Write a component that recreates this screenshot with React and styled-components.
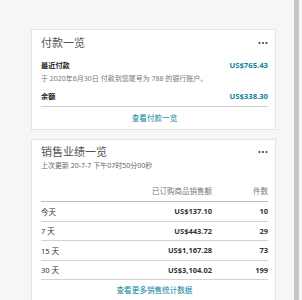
import { Fragment } from 'react'
import { createGlobalStyle, styled } from 'styled-components'

const GlobalStyle = createGlobalStyle`
    html, body {
        margin: 0;
        padding: 0;
        background: #f6f6f6;
        font-family: "Noto Sans", "Noto Sans CJK SC", sans-serif;
    }
`

const Page = styled.div`
    display: flex;
    width: 302px;
    height: 300px;
    overflow: hidden;
`

const Column = styled.div`
    display: flex;
    flex-direction: column;
    gap: 9px;
    padding: 29px 0 0 31px;
    width: 245px;
`

const Gutter = styled.div`
    width: 18px;
`

const Scrollbar = styled.div`
    width: 5px;
    background: #c6c6c6;
`

const Card = styled.div`
    background: #fff;
    border: 1px solid #e4e4e4;
    padding: 0 7px 0 9px;
`

const Head = styled.div`
    display: flex;
    justify-content: space-between;
    align-items: center;
    padding-top: ${(p) => p.$top}px;
    height: 12px;
`

const Title = styled.div`
    font-size: 11px;
    line-height: 12px;
    color: #555;
`

const Subtitle = styled.div`
    margin-top: 3px;
    font-size: 7px;
    line-height: 10px;
    color: #666;
`

const Line = styled.div`
    display: flex;
    justify-content: space-between;
    align-items: center;
    margin-top: ${(p) => p.$top}px;
    line-height: 10px;
`

const Label = styled.span`
    font-size: 7.2px;
    font-weight: 700;
    color: #1a1a1a;
`

const Money = styled.span`
    font-size: 7.7px;
    font-weight: 700;
    color: #0b8597;
`

const Note = styled.div`
    margin-top: 4px;
    font-size: 7px;
    line-height: 10px;
    color: #777;
`

const Block = styled.div`
    padding-bottom: 5px;
    border-bottom: 1px solid #cfcfcf;
`

const Link = styled.div`
    text-align: center;
    font-size: 7.6px;
    line-height: ${(p) => p.$h}px;
    color: #0b8597;
`

const Table = styled.div`
    display: grid;
    grid-template-columns: 1fr auto 56px;
    margin-top: 12px;
`

const Cell = styled.div`
    display: flex;
    align-items: center;
    justify-content: ${(p) => (p.$left ? 'flex-start' : 'flex-end')};
    height: ${(p) => (p.$head ? 14 : 18.5)}px;
    border-bottom: 1px solid ${(p) => (p.$head ? '#bdbdbd' : '#d2d2d2')};
    font-size: 7.5px;
    font-weight: ${(p) => (p.$bold ? 700 : 400)};
    color: ${(p) => (p.$head ? '#777' : '#333')};
    padding-bottom: ${(p) => (p.$head ? 4 : 0)}px;
`

const More = () => (
    <svg width="10" height="4" viewBox="0 0 10 4">
        <circle cx="1.5" cy="2" r="1.1" fill="#444" />
        <circle cx="5" cy="2" r="1.1" fill="#444" />
        <circle cx="8.5" cy="2" r="1.1" fill="#444" />
    </svg>
)

const rows = [
    ['今天', 'US$137.10', '10'],
    ['7 天', 'US$443.72', '29'],
    ['15 天', 'US$1,167.28', '73'],
    ['30 天', 'US$3,104.02', '199'],
]

export default function App() {
    return (
        <>
            <GlobalStyle />
            <Page>
                <Column>
                    <Card>
                        <Head $top={7}>
                            <Title>付款一览</Title>
                            <More />
                        </Head>
                        <Block>
                            <Line $top={11}>
                                <Label>最近付款</Label>
                                <Money>US$765.43</Money>
                            </Line>
                            <Note>于 2020年6月30日 付款到您尾号为 788 的银行账户。</Note>
                            <Line $top={7}>
                                <Label>余额</Label>
                                <Money>US$338.30</Money>
                            </Line>
                        </Block>
                        <Link $h={22}>查看付款一览</Link>
                    </Card>
                    <Card>
                        <Head $top={6}>
                            <Title>销售业绩一览</Title>
                            <More />
                        </Head>
                        <Subtitle>上次更新 20-7-7 下午07时50分00秒</Subtitle>
                        <Table>
                            <Cell $head $left />
                            <Cell $head>已订购商品销售额</Cell>
                            <Cell $head>件数</Cell>
                            {rows.map(([d, amt, n]) => (
                                <Fragment key={d}>
                                    <Cell $left>{d}</Cell>
                                    <Cell $bold>{amt}</Cell>
                                    <Cell $bold>{n}</Cell>
                                </Fragment>
                            ))}
                        </Table>
                        <Link $h={21}>查看更多销售统计数据</Link>
                    </Card>
                </Column>
                <Gutter />
                <Scrollbar />
            </Page>
        </>
    )
}
